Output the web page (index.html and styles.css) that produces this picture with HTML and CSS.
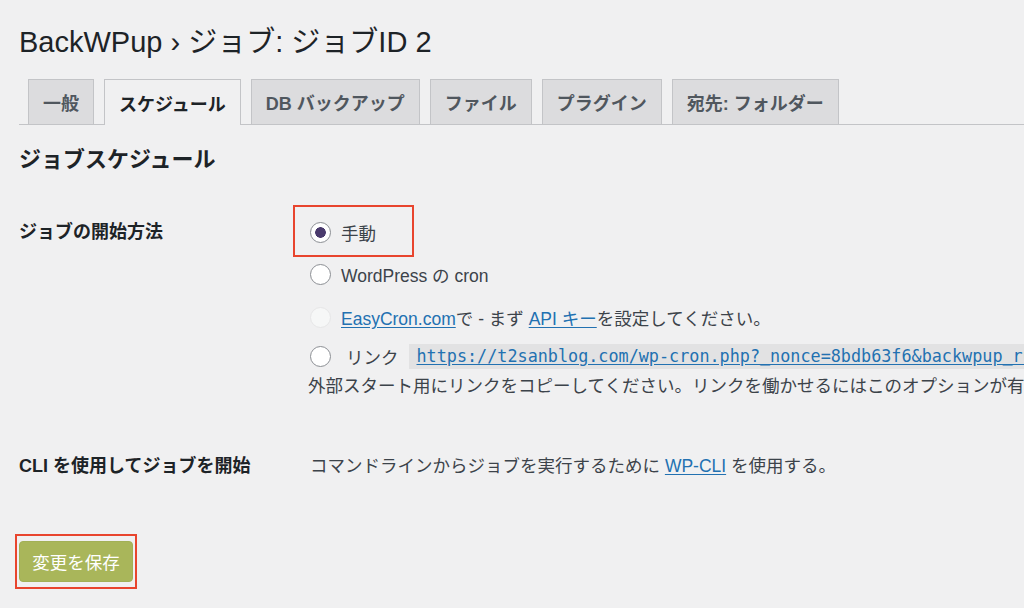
FILE: index.html
```html
<!DOCTYPE html>
<html lang="ja">
<head>
<meta charset="utf-8">
<title>BackWPup ジョブ</title>
<link rel="stylesheet" href="styles.css">
</head>
<body>
<div class="wrap">
  <h1 class="page-title">BackWPup › ジョブ: ジョブID 2</h1>
  <nav class="tabs">
    <a class="tab">一般</a>
    <a class="tab active">スケジュール</a>
    <a class="tab">DB バックアップ</a>
    <a class="tab">ファイル</a>
    <a class="tab">プラグイン</a>
    <a class="tab">宛先: フォルダー</a>
  </nav>
  <h2 class="section-title">ジョブスケジュール</h2>
  <div class="form-table">
    <div class="label">ジョブの開始方法</div>
    <div class="options">
      <label class="opt opt-first">
        <input type="radio" name="start" checked>
        <span>手動</span>
        <span class="highlight"></span>
      </label>
      <label class="opt">
        <input type="radio" name="start">
        <span>WordPress の cron</span>
      </label>
      <label class="opt">
        <input type="radio" name="start" disabled>
        <span><a class="link">EasyCron.com</a>で - まず <a class="link">API キー</a>を設定してください。</span>
      </label>
      <label class="opt opt-link">
        <input type="radio" name="start">
        <span class="link-label">リンク</span>
        <code class="url"><a class="link">https://t2sanblog.com/wp-cron.php?_nonce=8bdb63f6&amp;backwpup_run=runext&amp;jobid=2</a></code>
      </label>
      <p class="desc">外部スタート用にリンクをコピーしてください。リンクを働かせるにはこのオプションが有効でなければなりません。</p>
    </div>
    <div class="label label-cli">CLI を使用してジョブを開始</div>
    <div class="cli-text">コマンドラインからジョブを実行するために <a class="link">WP-CLI</a> を使用する。</div>
  </div>
  <div class="submit">
    <span class="save-frame"><button class="save">変更を保存</button></span>
  </div>
</div>
</body>
</html>
```
FILE: styles.css
```css
html, body {
  margin: 0;
  padding: 0;
  background: #f0f0f1;
  overflow: hidden;
}
body {
  width: 1024px;
  height: 608px;
  font-family: "Liberation Sans", "Noto Sans CJK JP", sans-serif;
  color: #3c434a;
  font-size: 17.5px;
}
.wrap {
  padding: 25px 0 0 19px;
}
.page-title {
  margin: 0;
  font-size: 29px;
  font-weight: 400;
  line-height: 34px;
  color: #1d2327;
}
.tabs {
  display: flex;
  gap: 10px;
  margin-top: 19px;
  padding-left: 9px;
  border-bottom: 1px solid #c3c4c7;
  height: 46px;
  white-space: nowrap;
}
.tab {
  display: flex;
  align-items: center;
  height: 44px;
  padding: 0 14px;
  background: #dcdcde;
  border: 1px solid #c3c4c7;
  border-bottom: none;
  font-weight: 700;
  font-size: 18px;
  color: #50575e;
  margin-top: 1px;
}
.tab.active {
  background: #f0f0f1;
  color: #1d2327;
  height: 45px;
  margin-bottom: -1px;
}
.section-title {
  margin: 20px 0 0;
  font-size: 22px;
  line-height: 30px;
  font-weight: 700;
  color: #1d2327;
}
.form-table {
  display: grid;
  grid-template-columns: 291px 1fr;
  margin-top: 36px;
}
.label {
  font-weight: 700;
  font-size: 18px;
  line-height: 42px;
  color: #1d2327;
}
.options {
  display: flex;
  flex-direction: column;
  white-space: nowrap;
  overflow: hidden;
}
.opt {
  position: relative;
  display: flex;
  align-items: center;
  gap: 10px;
  height: 42px;
}
.opt:nth-child(2) { height: 43px; }
.opt-link {
  height: 36px;
  gap: 0;
}
.opt input {
  appearance: none;
  -webkit-appearance: none;
  margin: 0;
  width: 21px;
  height: 21px;
  border-radius: 50%;
  border: 1px solid #8c8f94;
  background: #fff;
  flex: none;
}
.opt input:checked {
  background: radial-gradient(circle, #4a3a6d 0 5px, #fff 5.6px);
}
.opt input:disabled {
  border-color: #e6e6e7;
  background: #f6f7f7;
}
.opt-first {
  overflow: visible;
}
.options {
  overflow: visible;
}
.highlight {
  position: absolute;
  left: -17px;
  top: -6px;
  width: 117px;
  height: 48px;
  border: 2px solid #e8452e;
}
.link {
  color: #2271b1;
  text-decoration: underline;
  text-underline-offset: 2px;
}
.link-label {
  margin-left: 15px;
  margin-right: 10px;
}
.url {
  font-family: "DejaVu Sans Mono", monospace;
  font-size: 16.8px;
  background: #e2e2e3;
  padding: 2px 8px;
  line-height: 21px;
}
.desc {
  margin: 0 0 0 -2px;
  line-height: 24px;
}
.label-cli {
  margin-top: 47px;
}
.cli-text {
  margin-top: 47px;
  line-height: 42px;
}
.submit {
  margin-top: 47px;
  margin-left: -4px;
}
.save-frame {
  display: inline-flex;
  padding: 5px 2px;
  border: 2px solid #e8452e;
}
.save {
  font-family: "Liberation Sans", "Noto Sans CJK JP", sans-serif;
  font-size: 17.5px;
  color: #fff;
  background: #a9b65a;
  border: 1px solid #a2b056;
  border-radius: 4px;
  width: 114px;
  height: 41px;
  padding: 0;
}
```
